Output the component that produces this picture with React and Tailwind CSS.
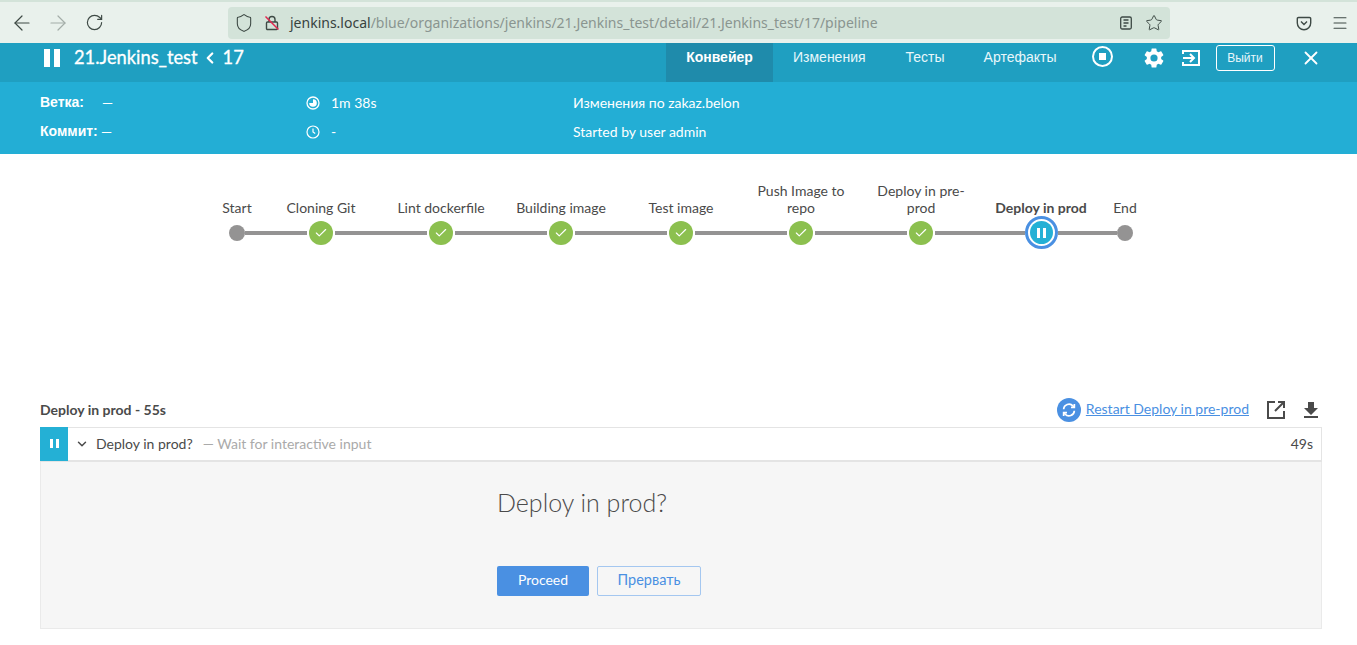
import React from "react";
import { ArrowLeft, ArrowRight, RotateCw, Shield, Star, Menu, Check, ChevronDown, ChevronLeft, X } from "lucide-react";

const lato = "font-['Lato','Liberation_Sans',sans-serif]";

function Pause({ className }) {
  return (
    <span className={"flex " + className}>
      <span className="w-[3px] h-full bg-white" />
      <span className="w-[3px] h-full bg-white ml-[3px]" />
    </span>
  );
}

function Node({ kind }) {
  if (kind === "dot") return <span className="w-4 h-4 rounded-full bg-[#949393] shrink-0" />;
  if (kind === "ok")
    return (
      <span className="w-6 h-6 mx-[2px] rounded-full bg-[#8cc04f] shrink-0 flex items-center justify-center">
        <Check size={14} color="#fff" strokeWidth={2} />
      </span>
    );
  return (
    <span className="w-[33px] h-[33px] rounded-full border-[3px] border-[#4a90e2] bg-white shrink-0 flex items-center justify-center">
      <span className="w-[23px] h-[23px] rounded-full bg-[#24b0d5] flex items-center justify-center">
        <Pause className="h-[10px]" />
      </span>
    </span>
  );
}

const stages = [
  { label: "Start", kind: "dot", w: "w-[48px]", first: true },
  { label: "Cloning Git", kind: "ok", w: "w-[120px]" },
  { label: "Lint dockerfile", kind: "ok", w: "w-[120px]" },
  { label: "Building image", kind: "ok", w: "w-[120px]" },
  { label: "Test image", kind: "ok", w: "w-[120px]" },
  { label: "Push Image to repo", kind: "ok", w: "w-[120px]" },
  { label: "Deploy in pre-prod", kind: "ok", w: "w-[120px]" },
  { label: "Deploy in prod", kind: "run", w: "w-[120px]", bold: true },
  { label: "End", kind: "dot", w: "w-[48px]", last: true },
];

function Stage({ s }) {
  return (
    <div className={"flex flex-col items-center " + s.w}>
      <div className={"h-[51px] w-[100px] flex items-end justify-center text-center text-[14px] leading-[17px] text-[#4a4a4a] " + (s.bold ? "font-bold" : "")}>
        <span className="block max-w-[100px]">{s.label}</span>
      </div>
      <div className="h-[33px] w-full flex items-center">
        <span className={"h-[4px] flex-1 " + (s.first ? "" : "bg-[#949393]")} />
        <Node kind={s.kind} />
        <span className={"h-[4px] flex-1 " + (s.last ? "" : "bg-[#949393]")} />
      </div>
    </div>
  );
}

export default function App() {
  return (
    <div className={"w-[1357px] h-[645px] overflow-hidden bg-white " + lato}>
      {/* browser chrome */}
      <div className="h-[43px] bg-[#e9f1ec] border-t-2 border-[#d3e3d9] flex items-center text-[#3e4a45] font-['Noto_Sans',sans-serif]">
        <div className="w-[228px] flex items-center pl-[10px]">
          <ArrowLeft size={24} strokeWidth={1.2} />
          <ArrowRight size={24} strokeWidth={1.2} className="ml-[12px] opacity-40" />
          <RotateCw size={19} strokeWidth={1.5} className="ml-[15px]" />
        </div>
        <div className="w-[942px] h-[32px] bg-[#d3e3d9] rounded-[4px] flex items-center pl-[6px] pr-[7px]">
          <Shield size={20} strokeWidth={1.3} />
          <svg width="16" height="16" viewBox="0 0 16 16" className="ml-[10px]" fill="none">
            <rect x="2.5" y="7" width="11" height="7.5" rx="1" stroke="#3e4a45" strokeWidth="1.4" />
            <path d="M5 7V4.5a3 3 0 0 1 6 0V7" stroke="#3e4a45" strokeWidth="1.4" />
            <path d="M1.5 1.5l13 13" stroke="#e22850" strokeWidth="1.5" />
          </svg>
          <span className="ml-[10px] text-[14px] whitespace-nowrap text-[#8a9590]">
            <span className="text-[#38423e]">jenkins.local</span>/blue/organizations/jenkins/21.Jenkins_test/detail/21.Jenkins_test/17/pipeline
          </span>
          <div className="ml-auto flex items-center gap-[12px]">
            <svg width="14" height="14" viewBox="0 0 14 14" fill="none" stroke="#3e4a45" strokeWidth="1.3">
              <rect x="1.7" y="1" width="10.6" height="12" rx="1.5" />
              <path d="M4.5 4h5M4.5 7h5M4.5 10h3" />
            </svg>
            <Star size={18} strokeWidth={1.3} />
          </div>
        </div>
        <div className="ml-auto flex items-center pr-[8px]">
          <svg width="16" height="16" viewBox="0 0 16 16" fill="none" stroke="#3e4a45" strokeWidth="1.4">
            <path d="M2.5 2.5h11a1.2 1.2 0 0 1 1.2 1.2V8a6.7 6.7 0 0 1-13.4 0V3.7a1.2 1.2 0 0 1 1.2-1.2z" />
            <path d="M5 6.5L8 9.5l3-3" />
          </svg>
          <Menu size={18} strokeWidth={1.4} className="ml-[19px]" />
        </div>
      </div>

      {/* top bar */}
      <div className="h-[39px] bg-[#1f9fc1] flex items-stretch text-white">
        <div className="w-[666px] flex items-center pl-[44px] pb-[10px]">
          <span className="flex h-[18px]">
            <span className="w-[6px] h-full bg-white" />
            <span className="w-[6px] h-full bg-white ml-[4px]" />
          </span>
          <span className="ml-[14px] text-[18.3px] [-webkit-text-stroke:0.3px_white]">21.Jenkins_test</span>
          <ChevronLeft size={18} strokeWidth={3} className="ml-[3px]" />
          <span className="ml-[4px] text-[18.3px] [-webkit-text-stroke:0.3px_white]">17</span>
        </div>
        <div className="w-[107px] bg-[#1f8bab] flex items-center justify-center pb-[10px] text-[14px] font-bold font-['Liberation_Sans',sans-serif]">Конвейер</div>
        <div className="flex items-start pt-[4px] text-[14px] text-[#e9f7fb] font-['Liberation_Sans',sans-serif]">
          <span className="ml-[20px]">Изменения</span>
          <span className="ml-[40px]">Тесты</span>
          <span className="ml-[39px]">Артефакты</span>
        </div>
        <div className="flex items-start">
          <span className="ml-[35px] w-[21px] h-[21px] mt-[3px] rounded-full border-2 border-white flex items-center justify-center">
            <span className="w-[7px] h-[7px] bg-white" />
          </span>
          <svg width="24" height="24" viewBox="0 0 24 24" fill="#fff" className="ml-[29px] mt-[3px]">
            <path d="M19.14 12.94c.04-.3.06-.61.06-.94s-.02-.64-.07-.94l2.03-1.58a.5.5 0 0 0 .12-.61l-1.92-3.32a.5.5 0 0 0-.59-.22l-2.39.96a7 7 0 0 0-1.62-.94l-.36-2.54a.48.48 0 0 0-.48-.41h-3.84a.48.48 0 0 0-.47.41l-.36 2.54c-.59.24-1.13.57-1.62.94l-2.39-.96a.48.48 0 0 0-.59.22L2.74 8.87a.48.48 0 0 0 .12.61l2.03 1.58c-.05.3-.09.63-.09.94s.02.64.07.94l-2.03 1.58a.5.5 0 0 0-.12.61l1.92 3.32c.12.22.37.29.59.22l2.39-.96c.5.38 1.03.7 1.62.94l.36 2.54c.05.24.24.41.48.41h3.84c.24 0 .44-.17.47-.41l.36-2.54c.59-.24 1.13-.56 1.62-.94l2.39.96c.22.08.47 0 .59-.22l1.92-3.32a.48.48 0 0 0-.12-.61l-2.01-1.58zM12 15.6A3.6 3.6 0 1 1 12 8.4a3.6 3.6 0 0 1 0 7.2z" />
          </svg>
          <svg width="18" height="18" viewBox="0 0 18 18" fill="none" stroke="#fff" strokeWidth="2" className="ml-[16px] mt-[6px]">
            <path d="M1 5V2h16v14H1v-3" />
            <path d="M1 9h10M8 5l4 4-4 4" />
          </svg>
          <span className="ml-[16px] mt-[2px] w-[59px] h-[26px] border border-white rounded-[3px] flex items-center justify-center text-[12px] font-['Liberation_Sans',sans-serif] text-[#e9f7fb]">Выйти</span>
          <X size={22} strokeWidth={2} className="ml-[25px] mt-[4px]" />
        </div>
      </div>

      {/* meta */}
      <div className="h-[72px] bg-[#23aed5] text-white text-[14px] flex pt-[12px] pl-[40px]">
        <div className="w-[266px] flex flex-col gap-[12px]">
          <div className="h-[17px] flex items-center"><b className="w-[62px] font-['Liberation_Sans',sans-serif]">Ветка:</b><span>—</span></div>
          <div className="h-[17px] flex items-center"><b className="w-[61px] font-['Liberation_Sans',sans-serif]">Коммит:</b><span>—</span></div>
        </div>
        <div className="w-[267px] flex flex-col gap-[12px]">
          <div className="h-[17px] flex items-center">
            <svg width="14" height="14" viewBox="0 0 14 14" fill="none">
              <circle cx="7" cy="7" r="6" stroke="#fff" strokeWidth="1.3" />
              <path d="M7 3.2A3.8 3.8 0 1 1 3.2 7H7z" fill="#fff" />
            </svg>
            <span className="ml-[11px]">1m 38s</span>
          </div>
          <div className="h-[17px] flex items-center">
            <svg width="14" height="14" viewBox="0 0 14 14" fill="none" stroke="#fff" strokeWidth="1.2">
              <circle cx="7" cy="7" r="6" />
              <path d="M7 3.5V7l2.2 1.6" />
            </svg>
            <span className="ml-[11px]">-</span>
          </div>
        </div>
        <div className="flex flex-col gap-[12px]">
          <div className="h-[17px] leading-[17px]">Изменения по zakaz.belon</div>
          <div className="h-[17px] leading-[17px]">Started by user admin</div>
        </div>
      </div>

      {/* pipeline graph */}
      <div className="h-[239px] pt-[11px] pl-[213px] flex items-start">
        {stages.map((s) => (
          <Stage key={s.label} s={s} />
        ))}
      </div>

      {/* log section */}
      <div className="ml-[40px] w-[1282px]">
        <div className="h-[33px] flex items-center text-[14px] font-bold text-[#4a4a4a]">
          <span>Deploy in prod - 55s</span>
          <div className="ml-auto flex items-center font-normal">
            <span className="w-6 h-6 rounded-full bg-[#4a90e2] flex items-center justify-center">
              <svg width="16" height="16" viewBox="0 0 24 24" fill="none" stroke="#fff" strokeWidth="2.6">
                <path d="M4 11a8 8 0 0 1 14-5l2 2M20 13a8 8 0 0 1-14 5l-2-2" />
                <path d="M20 3v5h-5M4 21v-5h5" />
              </svg>
            </span>
            <span className="ml-[5px] pb-[2px] text-[14px] text-[#4a90e2] underline">Restart Deploy in pre-prod</span>
            <svg width="18" height="18" viewBox="0 0 18 18" fill="none" stroke="#4a4a4a" strokeWidth="2" className="ml-[18px]">
              <path d="M8 1H1v16h16v-7" />
              <path d="M17 1L8 10M11 1h6v6" />
            </svg>
            <svg width="18" height="18" viewBox="0 0 18 18" fill="#4a4a4a" className="ml-[17px] mr-[2px]">
              <path d="M6 1h6v6h4l-7 7-7-7h4z" />
              <rect x="2" y="15" width="14" height="2" />
            </svg>
          </div>
        </div>
        <div className="mt-[1px] h-[35px] bg-white border border-[#e4e4e4] border-b-2 flex items-center text-[14px] text-[#4a4a4a]">
          <span className="w-[28px] h-[34px] -ml-px -mt-px bg-[#24b0d5] flex items-center justify-center">
            <Pause className="h-[9px]" />
          </span>
          <ChevronDown size={14} strokeWidth={2.5} className="ml-[7px]" />
          <span className="ml-[7px] pb-[2px]">Deploy in prod?</span>
          <span className="ml-[10px] pb-[2px] text-[#aaaaaa]">— Wait for interactive input</span>
          <span className="ml-auto mr-[8px] pb-[2px]">49s</span>
        </div>
        <div className="h-[167px] bg-[#f6f6f6] border border-t-0 border-[#eaeaea] pl-[456px] pt-[25px]">
          <div className="text-[25px] leading-[30px] font-light text-[#4a4a4a]">Deploy in prod?</div>
          <div className="mt-[49px] flex gap-[8px] text-[14px]">
            <span className="w-[92px] h-[30px] pb-[3px] bg-[#4a90e2] rounded-[2px] flex items-center justify-center text-white">Proceed</span>
            <span className="w-[104px] h-[30px] pb-[2px] border border-[#a4c7f0] rounded-[2px] flex items-center justify-center text-[14.5px] text-[#4a90e2]">Прервать</span>
          </div>
        </div>
      </div>
    </div>
  );
}
